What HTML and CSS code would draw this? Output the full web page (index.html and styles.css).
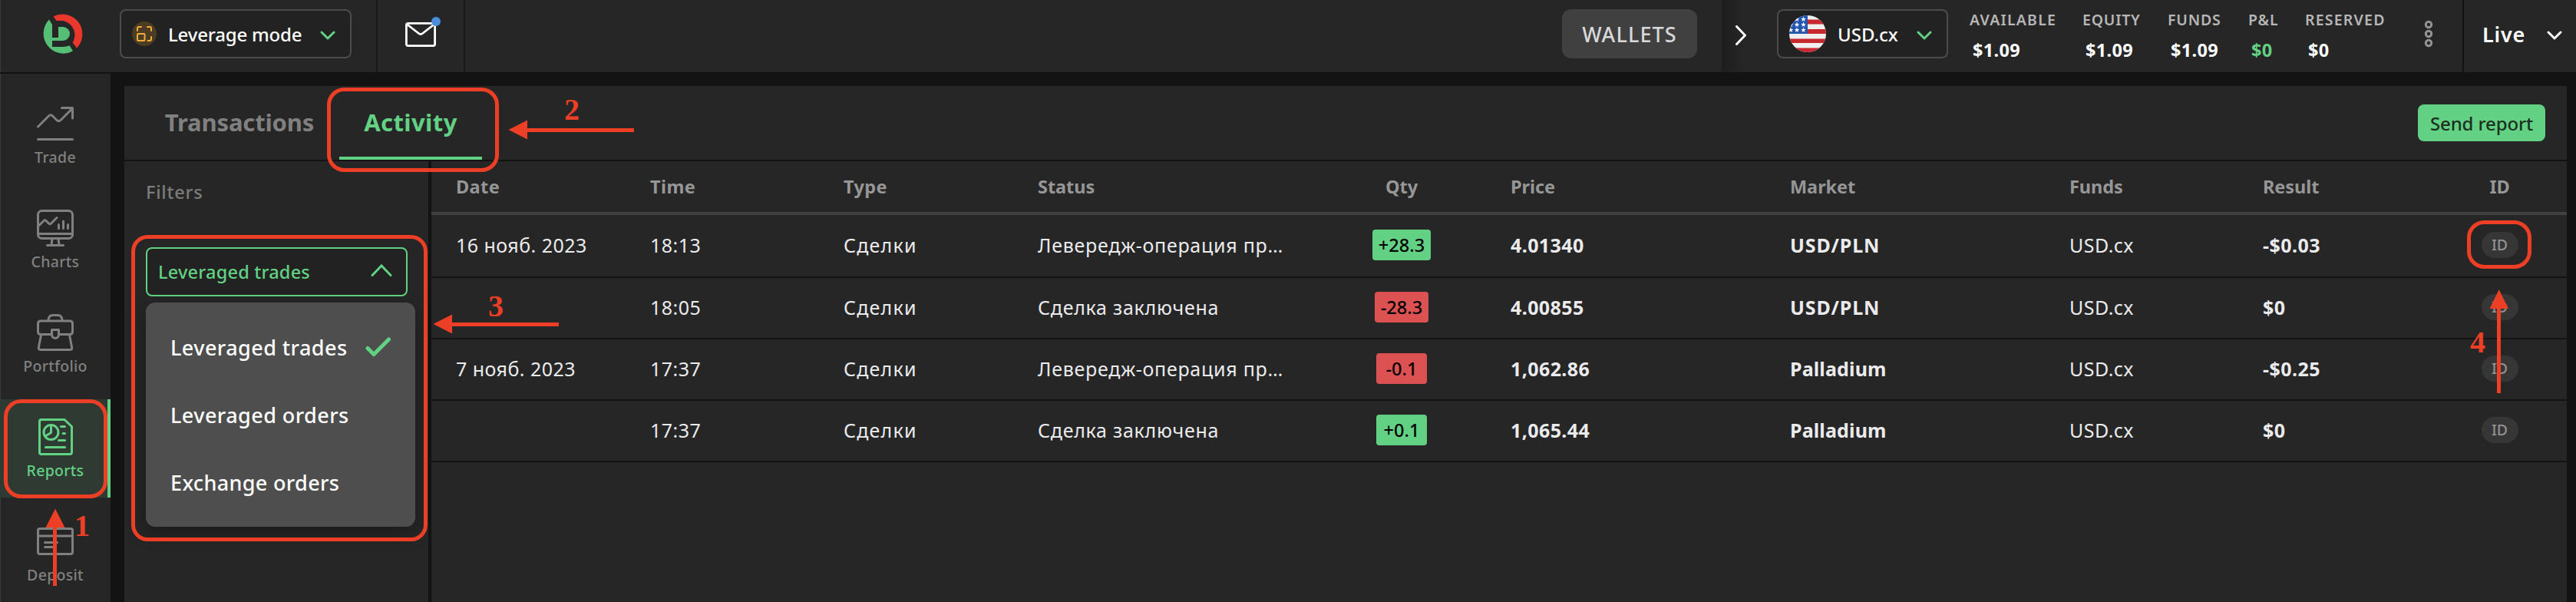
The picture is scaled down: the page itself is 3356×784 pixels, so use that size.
FILE: index.html
```
<!DOCTYPE html>
<html lang="en">

<head>
    <meta charset="UTF-8">
    <meta name="viewport" content="width=device-width, initial-scale=1.0">
    <title>Reports - Activity</title>
    <link rel="stylesheet" href="styles.css">
</head>

<body>
    <header class="topbar">
        <div class="logo">
            <svg width="52" height="52" viewBox="56 18 52 52">
                <path fill="#ea372b" d="M69.6 21.3A26 26 0 0 1 100 62.6L94.6 55.6A19 19 0 0 0 82 27H73.5Z" />
                <path fill="#57be75" d="M64 25.5L68 32V49H76V35H82A9 9 0 0 1 82 53H68V61H82Q87 61 90.5 59.3L95 66.5A26 26 0 0 1 64 25.5Z" />
            </svg>
        </div>
        <div class="select mode">
            <span class="mode-icon">
                <svg width="20" height="20" viewBox="0 0 20 20" fill="none" stroke="#f0ad3c" stroke-width="2" stroke-linecap="round" stroke-linejoin="round">
                    <rect x="1" y="10" width="9.5" height="9" rx="1" />
                    <path d="M1 6V3Q1 1 3 1H6M14 1H17Q19 1 19 3V6M19 14V17Q19 19 17 19H14.500" />
                </svg>
            </span>
            <span class="mode-text">Leverage mode</span>
            <svg class="chev" width="20" height="12" viewBox="0 0 20 12"><path d="M2 2L10 10L18 2" /></svg>
        </div>
        <div class="mail">
            <svg width="40" height="32" viewBox="0 0 40 32" fill="none" stroke="#fff" stroke-width="2.800" stroke-linejoin="round">
                <rect x="1.400" y="1.400" width="37.200" height="29.200" rx="2" />
                <path d="M2 2.500L17.500 14.500Q20 16.500 22.500 14.500L38 2.500" />
            </svg>
            <span class="dot"></span>
        </div>
        <button class="wallets">WALLETS</button>
        <div class="account">
            <svg class="next" width="14" height="26" viewBox="0 0 14 26"><path d="M1.500 1.500L12.500 13L1.500 24.500" /></svg>
            <div class="select currency">
                <svg width="48" height="48" viewBox="0 0 48 48">
                    <defs>
                        <clipPath id="round"><circle cx="24" cy="24" r="24" /></clipPath>
                        <path id="star" fill="#fff" d="M0 -3.500L0.900 -1.100L3.300 -1.100L1.400 0.500L2.100 3L0 1.500L-2.100 3L-1.400 0.500L-3.300 -1.100L-0.900 -1.100Z" />
                    </defs>
                    <g clip-path="url(#round)">
                        <rect width="48" height="48" fill="#efefef" />
                        <path fill="#c8282f" d="M0 5.500h48v6H0zM0 18h48v6H0zM0 30.500h48v5.500H0zM0 42.500h48V48H0z" />
                        <rect width="24" height="24" fill="#2256ae" />
                        <use href="#star" x="10" y="5" />
                        <use href="#star" x="18.500" y="5" />
                        <use href="#star" x="2" y="12" />
                        <use href="#star" x="10" y="12" />
                        <use href="#star" x="18.500" y="12" />
                        <use href="#star" x="2" y="19" />
                        <use href="#star" x="10" y="19" />
                        <use href="#star" x="18.500" y="19" />
                    </g>
                </svg>
                <span class="currency-text">USD.cx</span>
                <svg class="chev" width="20" height="12" viewBox="0 0 20 12"><path d="M2 2L10 10L18 2" /></svg>
            </div>
            <dl class="stats">
                <div class="stat available"><dt>AVAILABLE</dt><dd>$1.09</dd></div>
                <div class="stat equity"><dt>EQUITY</dt><dd>$1.09</dd></div>
                <div class="stat funds"><dt>FUNDS</dt><dd>$1.09</dd></div>
                <div class="stat pl"><dt>P&amp;L</dt><dd>$0</dd></div>
                <div class="stat reserved"><dt>RESERVED</dt><dd>$0</dd></div>
            </dl>
            <svg class="dots" width="12" height="36" viewBox="0 0 12 36" fill="none" stroke="#939393" stroke-width="3">
                <circle cx="6" cy="6" r="3.700" />
                <circle cx="6" cy="18" r="3.700" />
                <circle cx="6" cy="30" r="3.700" />
            </svg>
        </div>
        <div class="live">
            <span>Live</span>
            <svg class="chev white" width="20" height="12" viewBox="0 0 20 12"><path d="M2 2L10 10L18 2" /></svg>
        </div>
    </header>

    <div class="page">
        <nav class="sidebar">
            <a class="nav-item">
                <svg viewBox="0 0 48 48">
                    <path d="M1.500 28L15.500 14Q18 11.500 20.500 14L26 19.500Q28.500 22 31 19.500L46 4.500M32.500 3.500H46.500V17M1.500 44.500H46.500" />
                </svg>
                <span>Trade</span>
            </a>
            <a class="nav-item">
                <svg viewBox="0 0 48 48">
                    <rect x="1.500" y="1.500" width="45" height="36" rx="5" />
                    <path d="M2 21.500L9 14.500Q10.500 13 12 14.500L15.500 18Q17 19.500 18.500 18L26 10.500M28.500 19.500V24.500M34.500 15V24.500M40.500 19.500V24.500M2 31.500H46M20 38L19 46M28 38L29 46M13.500 46.500H34.500" />
                </svg>
                <span>Charts</span>
            </a>
            <a class="nav-item">
                <svg viewBox="0 0 48 48">
                    <path d="M15 8.500Q15 1.500 21 1.500H27Q33 1.500 33 8.500M5 26.500Q1.500 26.500 1.500 23V12.500Q1.500 9 5 9H43Q46.500 9 46.500 12.500V23Q46.500 26.500 43 26.500H29M5 26.500H19M5.500 27L2.300 44Q2 46.500 4.500 46.500H43.500Q46 46.500 45.700 44L42.500 27" />
                    <path d="M19.500 20.500H28.500V26.500Q28.500 31 24 31.500Q19.500 31 19.500 26.500Z" />
                </svg>
                <span>Portfolio</span>
            </a>
            <a class="nav-item active">
                <svg viewBox="0 0 48 48">
                    <path d="M4.500 1.500H36L45.500 10.500V44Q45.500 46.500 43 46.500H6Q3.500 46.500 3.500 44V4Q3.500 1.500 6 1.500" />
                    <circle cx="18.500" cy="18" r="9.500" />
                    <path d="M18.500 9V18.500L11 23M31.500 10.500H36.500M34 19.500H36.500M28.500 28.500H36.500M11.500 37.500H36.500" />
                </svg>
                <span>Reports</span>
            </a>
            <a class="nav-item">
                <svg viewBox="0 0 48 48">
                    <rect x="1.500" y="7.500" width="45" height="33" rx="2.500" />
                    <path d="M2 17H46M10.500 25.500H26.500M10.500 31.500H21" />
                </svg>
                <span>Deposit</span>
            </a>
        </nav>

        <main class="panel">
            <div class="tabs">
                <a class="tab">Transactions</a>
                <a class="tab active">Activity</a>
                <button class="send">Send report</button>
            </div>
            <div class="content">
                <aside class="filters">
                    <h3>Filters</h3>
                    <div class="filter-select">
                        <span>Leveraged trades</span>
                        <svg class="chev-up" width="28" height="16" viewBox="0 0 28 16"><path d="M2 14.500L14 2L26 14.500" /></svg>
                    </div>
                    <ul class="menu">
                        <li>Leveraged trades
                            <svg width="34" height="26" viewBox="0 0 34 26"><path d="M3 14.500L11 22.500L30.500 3" /></svg>
                        </li>
                        <li>Leveraged orders</li>
                        <li class="exchange">Exchange orders</li>
                    </ul>
                </aside>
                <section class="table">
                    <div class="row head">
                        <span class="wide">Date</span>
                        <span class="wide">Time</span>
                        <span class="wide">Type</span>
                        <span>Status</span>
                        <span class="qty">Qty</span>
                        <span>Price</span>
                        <span>Market</span>
                        <span>Funds</span>
                        <span>Result</span>
                        <span class="id">ID</span>
                    </div>
                    <div class="row">
                        <span>16 нояб. 2023</span>
                        <span>18:13</span>
                        <span class="type">Сделки</span>
                        <span class="status">Левередж-операция пр…</span>
                        <span class="qty"><i class="badge up">+28.3</i></span>
                        <span class="price">4.01340</span>
                        <span class="market">USD/PLN</span>
                        <span>USD.cx</span>
                        <span class="result">-$0.03</span>
                        <span class="id"><i class="pill">ID</i></span>
                    </div>
                    <div class="row">
                        <span></span>
                        <span>18:05</span>
                        <span class="type">Сделки</span>
                        <span class="status">Сделка заключена</span>
                        <span class="qty"><i class="badge down">-28.3</i></span>
                        <span class="price">4.00855</span>
                        <span class="market">USD/PLN</span>
                        <span>USD.cx</span>
                        <span class="result">$0</span>
                        <span class="id"><i class="pill">ID</i></span>
                    </div>
                    <div class="row">
                        <span>7 нояб. 2023</span>
                        <span>17:37</span>
                        <span class="type">Сделки</span>
                        <span class="status">Левередж-операция пр…</span>
                        <span class="qty"><i class="badge down">-0.1</i></span>
                        <span class="price">1,062.86</span>
                        <span class="market name">Palladium</span>
                        <span>USD.cx</span>
                        <span class="result">-$0.25</span>
                        <span class="id"><i class="pill">ID</i></span>
                    </div>
                    <div class="row">
                        <span></span>
                        <span>17:37</span>
                        <span class="type">Сделки</span>
                        <span class="status">Сделка заключена</span>
                        <span class="qty"><i class="badge up">+0.1</i></span>
                        <span class="price">1,065.44</span>
                        <span class="market name">Palladium</span>
                        <span>USD.cx</span>
                        <span class="result">$0</span>
                        <span class="id"><i class="pill">ID</i></span>
                    </div>
                </section>
            </div>
        </main>
    </div>

    <!-- step marks over the page -->
    <svg class="marks" width="3356" height="784" viewBox="0 0 3356 784">
        <g class="boxes">
            <rect x="7.500" y="522.500" width="130" height="124" rx="20" />
            <rect x="428.500" y="116.500" width="219" height="105" rx="20" />
            <rect x="173.500" y="308.500" width="381" height="394" rx="19" />
            <rect x="3216.500" y="289.500" width="79" height="58" rx="20" />
        </g>
        <g class="arrows">
            <path d="M72 662.500L84.500 687H74V763H69V687H59.500Z" />
            <path d="M662.500 169L687 156.500V167H826V172H687V181.500Z" />
            <path d="M564.500 422L589 409.500V420H728V425H589V434.500Z" />
            <path d="M3255.700 377L3268 402H3258V512H3253V402H3243.500Z" />
            <text x="97" y="698">1</text>
            <text x="735" y="156">2</text>
            <text x="636" y="412">3</text>
            <text x="3218" y="459">4</text>
        </g>
    </svg>
</body>

</html>
```
FILE: styles.css
```
* {
    margin: 0;
    padding: 0;
    box-sizing: border-box;
}

body {
    height: 784px;
    position: relative;
    overflow: hidden;
    background-color: #131313;
    color: #fff;
    font-family: "Noto Sans", sans-serif;
    font-size: 25px;
}

button {
    border: none;
    font-family: inherit;
}

svg {
    display: block;
    flex-shrink: 0;
}

/* top bar */
.topbar {
    height: 94px;
    display: flex;
    background-color: #262626;
    box-shadow: inset 1px 0 #3a3a3a;
}

.logo {
    width: 156px;
    padding: 18px 0 0 56px;
}

.select {
    height: 64px;
    margin-top: 12px;
    display: flex;
    align-items: center;
    border: 2px solid #4c4c4c;
    border-radius: 8px;
    background-color: #222;
}

.mode {
    width: 302px;
    padding: 0 19px 0 14px;
}

.mode-icon {
    width: 32px;
    height: 32px;
    margin-right: 15px;
    display: flex;
    align-items: center;
    justify-content: center;
    border-radius: 50%;
    background-color: #4b3c22;
}

.mode-text {
    font-size: 24px;
    font-weight: 500;
    letter-spacing: -0.2px;
}

.chev {
    margin-left: auto;
    margin-top: 4px;
    fill: none;
    stroke: #62d184;
    stroke-width: 3;
    stroke-linecap: round;
    stroke-linejoin: round;
}

.chev.white {
    stroke: #fff;
}

.mail {
    position: relative;
    width: 116px;
    height: 94px;
    margin-left: 32px;
    padding: 29px 0 0 36px;
    border-left: 2px solid #191919;
    border-right: 2px solid #191919;
}

.dot {
    position: absolute;
    top: 22px;
    left: 70px;
    width: 12px;
    height: 12px;
    border-radius: 50%;
    background-color: #4a8ddc;
}

.wallets {
    width: 176px;
    height: 64px;
    margin: 12px 32px 0 auto;
    border-radius: 12px;
    background-color: #404040;
    color: #d8d8d8;
    font-size: 27px;
    font-weight: 500;
    letter-spacing: 1.1px;
}

.account {
    width: 965px;
    display: flex;
    background: linear-gradient(90deg, #1e1e1e, #262626 30px);
}

.next {
    margin: 33px 40px 0 18px;
    fill: none;
    stroke: #fff;
    stroke-width: 3;
    stroke-linecap: round;
}

.currency {
    width: 223px;
    padding: 0 19px 0 14px;
}

.currency-text {
    margin-left: 15px;
    font-size: 24px;
    font-weight: 500;
}

.stats {
    display: flex;
    margin-left: 28px;
    padding-top: 12px;
}

.stat dt {
    color: #b6b6b6;
    font-size: 19.5px;
    font-weight: 600;
    line-height: 28px;
    letter-spacing: 0.8px;
}

.stat dd {
    padding-left: 4px;
    font-size: 23.5px;
    font-weight: 700;
    line-height: 34px;
    margin-top: 8px;
    letter-spacing: 0.3px;
}

.available {
    width: 147px;
}

.stat.available dt,
.stat.reserved dt {
    letter-spacing: 1.2px;
}

.equity {
    width: 111px;
}

.funds {
    width: 105px;
}

.pl {
    width: 74px;
}

.pl dd {
    color: #62d184;
}

.reserved {
    width: 155px;
}

.dots {
    margin-top: 26px;
}

.live {
    width: 148px;
    height: 94px;
    padding: 0 18px 6px 24px;
    display: flex;
    align-items: center;
    border-left: 2px solid #131313;
    font-size: 27px;
    font-weight: 600;
    letter-spacing: 0.8px;
}

/* layout under the bar */
.page {
    height: 688px;
    margin-top: 2px;
    display: flex;
}

.sidebar {
    width: 144px;
    padding-top: 16px;
    display: flex;
    flex-direction: column;
    gap: 8px;
    flex-shrink: 0;
    background-color: #262626;
    box-shadow: inset 1px 0 #3a3a3a;
}

.nav-item {
    height: 128px;
    padding-top: 25px;
    display: flex;
    flex-direction: column;
    align-items: center;
    flex-shrink: 0;
    color: #808080;
    font-size: 19.5px;
    font-weight: 500;
    letter-spacing: 0.3px;
}

.nav-item svg {
    width: 48px;
    height: 48px;
    fill: none;
    stroke: currentColor;
    stroke-width: 3;
    stroke-linecap: round;
    stroke-linejoin: round;
}

.nav-item span {
    margin-top: 6px;
    line-height: 28px;
}

.nav-item.active {
    background-color: #2f3a33;
    box-shadow: inset -4px 0 #62d184;
    color: #62d184;
}

.panel {
    width: 3182px;
    margin: 16px 0 0 18px;
}

.tabs {
    height: 96px;
    padding: 0 28px 0 20px;
    display: flex;
    background-color: #262626;
}

.tab {
    width: 260px;
    height: 96px;
    color: #808080;
    font-size: 31px;
    font-weight: 700;
    line-height: 95px;
    letter-spacing: -0.15px;
    text-align: center;
}

.tab.active {
    width: 186px;
    border-bottom: 4px solid #62d184;
    color: #62d184;
    letter-spacing: 0.4px;
}

.send {
    width: 166px;
    height: 48px;
    margin: 24px 0 0 auto;
    border-radius: 8px;
    background-color: #62d184;
    color: #1b3020;
    font-size: 24px;
    font-weight: 500;
    letter-spacing: -0.13px;
}

.content {
    height: 574px;
    margin-top: 2px;
    display: flex;
    gap: 4px;
}

.filters {
    width: 396px;
    padding-left: 28px;
    background-color: #262626;
}

.filters h3 {
    padding-top: 24px;
    color: #7c7c7c;
    font-size: 23.5px;
    font-weight: 500;
    line-height: 32px;
    letter-spacing: 0.8px;
}

.filter-select {
    width: 341px;
    height: 64px;
    margin-top: 56px;
    padding: 0 18px 0 14px;
    display: flex;
    align-items: center;
    justify-content: space-between;
    border: 2px solid #62d184;
    border-radius: 8px;
    background-color: #222;
    color: #62d184;
    font-size: 23.5px;
    font-weight: 500;
    letter-spacing: 0.22px;
}

.chev-up {
    margin-bottom: 4px;
    fill: none;
    stroke: #62d184;
    stroke-width: 3;
    stroke-linecap: round;
}

.menu {
    width: 351px;
    height: 292px;
    margin-top: 8px;
    padding: 14px 31px 14px 32px;
    border-radius: 12px;
    background-color: #4e4e4e;
    box-shadow: 0 8px 24px rgba(0, 0, 0, 0.3);
    list-style: none;
    font-size: 27px;
    font-weight: 500;
    letter-spacing: 0.44px;
}

.menu li {
    height: 88px;
    display: flex;
    align-items: center;
    justify-content: space-between;
}

.menu .exchange {
    letter-spacing: 0.34px;
}

.menu svg {
    fill: none;
    stroke: #62d184;
    stroke-width: 5;
    stroke-linecap: round;
    stroke-linejoin: round;
}

/* activity table */
.table {
    width: 2782px;
    background-color: #262626;
}

.row {
    height: 80px;
    padding-left: 32px;
    padding-bottom: 2px;
    display: grid;
    grid-template-columns: 253px 252px 253px 332px 284px 364px 364px 252px 253px 111px;
    align-items: center;
    border-bottom: 2px solid #131313;
    color: #ebebee;
    letter-spacing: 0.46px;
}

.row.head {
    height: 70px;
    padding-bottom: 0;
    border-bottom: 4px solid #404040;
    color: #969696;
    font-size: 23.5px;
    font-weight: 700;
    letter-spacing: -0.05px;
}

.row.head + .row {
    height: 82px;
}

.head .wide {
    letter-spacing: 0.4px;
}

.type {
    letter-spacing: 1.2px;
}

.status {
    letter-spacing: 0.74px;
}

.price,
.market,
.result {
    font-weight: 700;
}

.price {
    letter-spacing: 0.4px;
}

.market {
    letter-spacing: 0.86px;
}

.market.name {
    letter-spacing: 0.14px;
}

.qty,
.id {
    display: flex;
    justify-content: center;
}

.badge {
    min-width: 66px;
    height: 40px;
    padding: 0 8px;
    border-radius: 4px;
    color: #000;
    font-size: 23.5px;
    font-style: normal;
    font-weight: 500;
    line-height: 40px;
    letter-spacing: 0.07px;
    text-align: center;
}

.up {
    background-color: #62d184;
}

.down {
    background-color: #dc5252;
}

.pill {
    width: 48px;
    height: 34px;
    border-radius: 17px;
    background-color: #363636;
    color: #929292;
    font-size: 19.5px;
    font-style: normal;
    font-weight: 500;
    line-height: 34px;
    letter-spacing: 0;
    text-align: center;
}

/* step marks */
.marks {
    position: absolute;
    top: 0;
    left: 0;
}

.boxes {
    fill: none;
    stroke: #ec3f25;
    stroke-width: 5;
}

.arrows {
    fill: #ec3f25;
    font-family: "Liberation Serif", serif;
    font-size: 40px;
    font-weight: 700;
}
```
